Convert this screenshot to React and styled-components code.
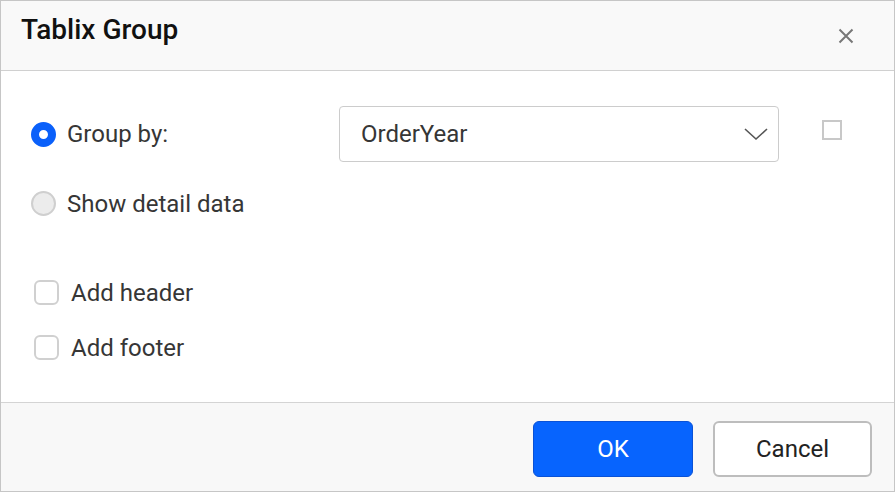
import React from "react";
import styled, { createGlobalStyle } from "styled-components";

const GlobalStyle = createGlobalStyle`
  html, body {
    margin: 0;
    padding: 0;
    background: #ffffff;
  }
  body {
    font-family: Roboto, "Liberation Sans", Arial, sans-serif;
  }
`;

const Dialog = styled.div`
  width: 895px;
  height: 492px;
  box-sizing: border-box;
  border: 1px solid #c6c6c6;
  display: flex;
  flex-direction: column;
  background: #fff;
`;

const Header = styled.div`
  height: 69px;
  flex-shrink: 0;
  display: flex;
  align-items: center;
  justify-content: space-between;
  padding: 0 40px 0 20px;
  background: #f9f9f9;
  border-bottom: 1px solid #d0d0d0;
`;

const Title = styled.h1`
  margin: 0;
  font-size: 28px;
  font-weight: 500;
  color: #111;
  padding-bottom: 12px;
`;

const CloseButton = styled.button`
  border: none;
  background: transparent;
  padding: 0;
  width: 16px;
  height: 16px;
  display: flex;
  align-items: center;
  justify-content: center;
  cursor: pointer;
`;

const Body = styled.div`
  flex: 1;
  padding: 35px 30px 0 30px;
  display: flex;
  flex-direction: column;
`;

const Row = styled.div`
  display: flex;
  align-items: center;
  height: ${({ h }) => h}px;
  margin-top: ${({ gap }) => gap || 0}px;
`;

const LabelCell = styled.label`
  width: 308px;
  display: flex;
  align-items: center;
  gap: 11px;
  font-size: 24px;
  color: #363636;
  cursor: pointer;
`;

const Radio = styled.span`
  width: 25px;
  height: 25px;
  box-sizing: border-box;
  border-radius: 50%;
  flex-shrink: 0;
  border: ${({ checked }) =>
    checked ? "8px solid #0a60fa" : "2px solid #cfcfcf"};
  background: ${({ checked }) => (checked ? "#fff" : "#ececec")};
`;

const Select = styled.div`
  width: 440px;
  height: 56px;
  box-sizing: border-box;
  border: 1px solid #cccccc;
  border-radius: 4px;
  display: flex;
  align-items: center;
  justify-content: space-between;
  padding: 0 10px 0 21px;
  font-size: 24px;
  color: #363636;
`;

const SmallBox = styled.span`
  width: 20px;
  height: 20px;
  box-sizing: border-box;
  border: 2px solid #c8c8c8;
  margin-left: 43px;
  margin-top: -8px;
`;

const CheckLabel = styled.label`
  display: flex;
  align-items: center;
  gap: 12px;
  padding-left: 3px;
  font-size: 24px;
  color: #363636;
  cursor: pointer;
`;

const CheckBox = styled.span`
  width: 25px;
  height: 25px;
  box-sizing: border-box;
  border: 2px solid #d0d0d0;
  border-radius: 6px;
  background: #fff;
`;

const Footer = styled.div`
  height: 89px;
  box-sizing: border-box;
  flex-shrink: 0;
  border-top: 1px solid #d4d4d4;
  background: #f8f8f8;
  display: flex;
  align-items: center;
  justify-content: flex-end;
  gap: 20px;
  padding: 4px 22px 0 0;
`;

const Button = styled.button`
  width: ${({ primary }) => (primary ? 160 : 159)}px;
  height: 56px;
  border-radius: 6px;
  font-family: Roboto, "Liberation Sans", Arial, sans-serif;
  font-size: 24px;
  cursor: pointer;
  border: ${({ primary }) =>
    primary ? "1px solid #0a52d6" : "2px solid #bdbdbd"};
  background: ${({ primary }) => (primary ? "#0764fe" : "#fff")};
  color: ${({ primary }) => (primary ? "#fff" : "#222")};
`;

const App = () => {
  return (
    <>
      <GlobalStyle />
      <Dialog>
        <Header>
          <Title>Tablix Group</Title>
          <CloseButton aria-label="Close">
            <svg width="16" height="16" viewBox="0 0 16 16">
              <path
                d="M1.5 1.5 L14.5 14.5 M14.5 1.5 L1.5 14.5"
                stroke="#777"
                strokeWidth="2"
                fill="none"
              />
            </svg>
          </CloseButton>
        </Header>
        <Body>
          <Row h={56}>
            <LabelCell>
              <Radio checked />
              Group by:
            </LabelCell>
            <Select>
              OrderYear
              <svg width="24" height="14" viewBox="0 0 24 14">
                <path
                  d="M1 2 L12 12 L23 2"
                  stroke="#555"
                  strokeWidth="1.6"
                  fill="none"
                />
              </svg>
            </Select>
            <SmallBox />
          </Row>
          <Row h={25} gap={29}>
            <LabelCell>
              <Radio />
              Show detail data
            </LabelCell>
          </Row>
          <Row h={25} gap={64}>
            <CheckLabel>
              <CheckBox />
              Add header
            </CheckLabel>
          </Row>
          <Row h={25} gap={30}>
            <CheckLabel>
              <CheckBox />
              Add footer
            </CheckLabel>
          </Row>
        </Body>
        <Footer>
          <Button primary>OK</Button>
          <Button>Cancel</Button>
        </Footer>
      </Dialog>
    </>
  );
};

export default App;
